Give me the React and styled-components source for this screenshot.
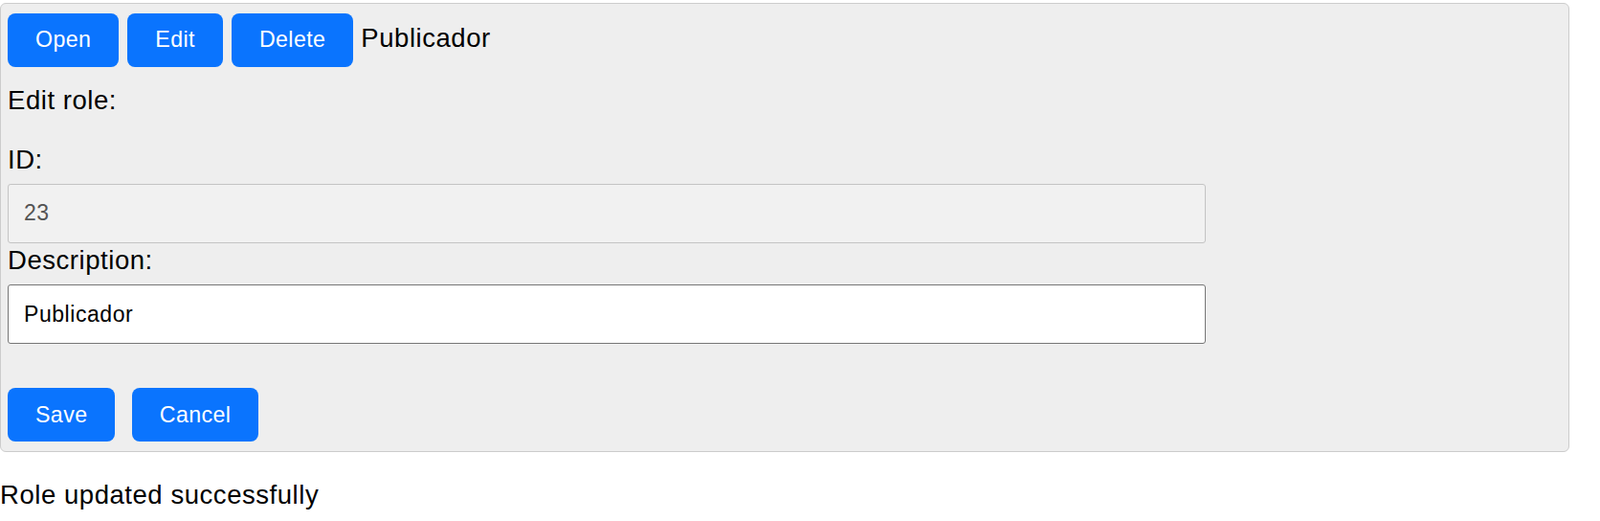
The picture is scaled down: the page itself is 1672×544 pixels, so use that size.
import React from 'react';
import styled, { createGlobalStyle } from 'styled-components';

const GlobalStyle = createGlobalStyle`
  html, body {
    margin: 0;
    padding: 0;
    background: #ffffff;
  }

  body {
    font-family: 'Liberation Sans', Arial, Helvetica, sans-serif;
    font-size: 27.5px;
    line-height: 31px;
    letter-spacing: 0.55px;
    color: #000000;
  }
`;

const Card = styled.div`
  box-sizing: border-box;
  width: 1640px;
  margin-top: 3px;
  padding: 9.5px 7px 10px;
  background-color: #eeeeee;
  border: 1px solid #cccccc;
  border-radius: 6px;
`;

const Toolbar = styled.div`
  display: flex;
  align-items: baseline;
  gap: ${props => props.gap || 9}px;
  margin-top: ${props => props.top || 0}px;
`;

const Button = styled.button`
  box-sizing: border-box;
  height: 56px;
  padding: 0 29px;
  border: none;
  border-radius: 8px;
  background-color: #0a74fe;
  color: #ffffff;
  font-family: inherit;
  font-size: 23.2px;
  line-height: normal;
  letter-spacing: 0.4px;
  cursor: pointer;
`;

const Title = styled.span`
  margin-left: -1px;
`;

const Heading = styled.div`
  margin-top: 19px;
`;

const Label = styled.label`
  display: block;
  margin-top: ${props => props.top}px;
`;

const Input = styled.input`
  display: block;
  box-sizing: border-box;
  width: 1252px;
  height: 62.5px;
  margin-top: ${props => props.top}px;
  padding: 0 16px;
  border: 1px solid ${props => (props.disabled ? '#c4c4c4' : '#767676')};
  border-radius: 3px;
  background-color: ${props => (props.disabled ? '#f1f1f1' : '#ffffff')};
  color: ${props => (props.disabled ? '#545454' : '#000000')};
  font-family: inherit;
  font-size: 23px;
  letter-spacing: 0.55px;
  outline: none;
`;

const Message = styled.p`
  margin: 29px 0 0;
`;

const App = () => {
  return (
    <div>
      <GlobalStyle />
      <Card>
        <Toolbar>
          <Button>Open</Button>
          <Button>Edit</Button>
          <Button>Delete</Button>
          <Title>Publicador</Title>
        </Toolbar>
        <Heading>Edit role:</Heading>
        <Label top={31} htmlFor="role-id">ID:</Label>
        <Input id="role-id" top={10} value="23" disabled readOnly />
        <Label top={2} htmlFor="role-desc">Description:</Label>
        <Input id="role-desc" top={9.8} defaultValue="Publicador" />
        <Toolbar gap={17.3} top={46.2}>
          <Button>Save</Button>
          <Button>Cancel</Button>
        </Toolbar>
      </Card>
      <Message>Role updated successfully</Message>
    </div>
  );
};

export default App;
